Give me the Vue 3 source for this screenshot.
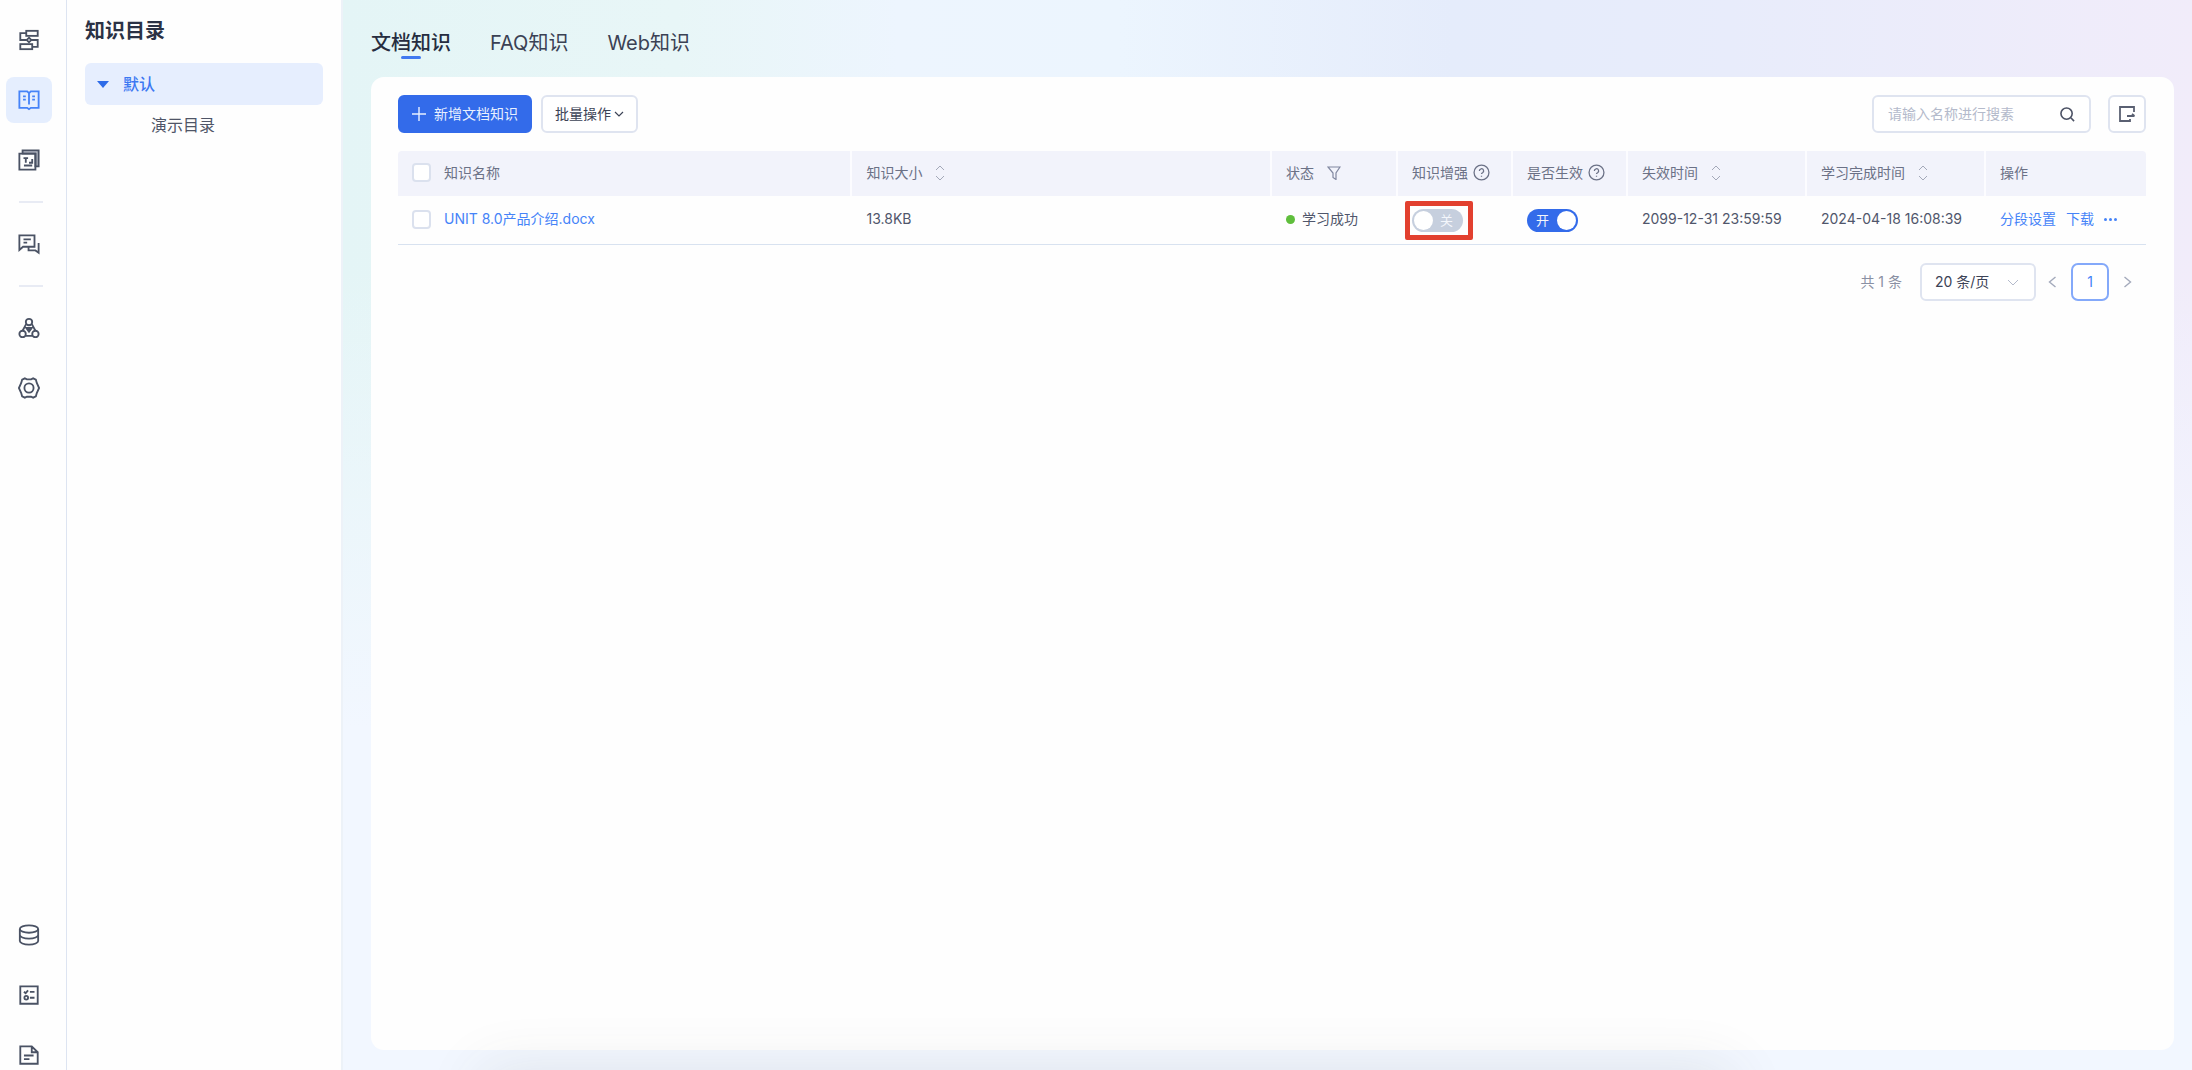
<script setup>
import { ref } from 'vue'

const tabs = ['文档知识', 'FAQ知识', 'Web知识']
const activeTab = ref(0)
const keyword = ref('')
const pageSize = ref('20')
const allChecked = ref(false)

const rows = ref([
  {
    id: 1,
    name: 'UNIT 8.0产品介绍.docx',
    size: '13.8KB',
    status: '学习成功',
    enhanced: false,
    enabled: true,
    expires: '2099-12-31 23:59:59',
    learned: '2024-04-18 16:08:39',
    checked: false,
  },
])
</script>

<template>
  <div class="app">
    <nav class="rail" aria-label="主导航">
      <div class="rail-group">
        <a class="rail-item" href="#" aria-label="流程">
          <svg viewBox="0 0 24 24" class="icon">
            <rect x="9" y="2" width="12.500" height="5.500" />
            <rect x="2.500" y="16.500" width="13" height="5.500" />
            <path d="M9 4.500H2.500V12h7M14 12h7.500v7.500h-6" />
            <path d="M12 9.500l2.500 2.500L12 14.500 9.500 12z" />
          </svg>
        </a>
        <a class="rail-item active" href="#" aria-label="知识">
          <svg viewBox="0 0 24 24" class="icon">
            <path d="M12 4.500L10 2.500H1.500v18h8.500l2 1.500 2-1.500h8.500v-18H14zM12 4.500V17M5.500 8h3M5.500 11.500h3M15.500 8h3M15.500 11.500h3" />
          </svg>
        </a>
        <a class="rail-item" href="#" aria-label="素材">
          <svg viewBox="0 0 24 24" class="icon">
            <path class="shade" d="M5 5V1.500h17.500V19H19V5z" />
            <path d="M1.500 5H19v17.500H1.500z" />
            <path d="M6 10h5M8.500 10v5M12 15h3.500v-4M6.500 18h9" />
          </svg>
        </a>
        <i class="rail-line"></i>
        <a class="rail-item" href="#" aria-label="对话">
          <svg viewBox="0 0 24 24" class="icon">
            <path d="M1.500 2.500H18V15H5.500l-4 3.500zM6 7h8M6 10.500h4M22.500 11v10.500L19 19h-7.500v-3" />
          </svg>
        </a>
        <i class="rail-line"></i>
        <a class="rail-item" href="#" aria-label="模型">
          <svg viewBox="0 0 24 24" class="icon">
            <circle cx="12" cy="5.500" r="3.500" />
            <circle cx="5" cy="18.500" r="3.500" />
            <circle cx="19" cy="18.500" r="3.500" />
            <path d="M9 7.500L5 15M15 7.500L19 15M8 20.500h8" />
            <path class="solid" d="M9 12h6l-3 4z" />
          </svg>
        </a>
        <a class="rail-item" href="#" aria-label="设置">
          <svg viewBox="0 0 24 24" class="icon">
            <path d="M7.500 1.500l2.200 1h4.600l2.200-1 3 1.500 1 3.500 2.500 5.500-2.500 5.500-1 3.500-3 1.500-2.200-1H9.700l-2.200 1-3-1.500-1-3.500L1 12l2.500-5.500 1-3.500z" />
            <circle cx="12" cy="12" r="5" />
          </svg>
        </a>
      </div>
      <div class="rail-group bottom">
        <a class="rail-item" href="#" aria-label="数据">
          <svg viewBox="0 0 24 24" class="icon">
            <ellipse cx="12" cy="5.500" rx="10" ry="4" />
            <path d="M2 5.500v13c0 2 4 4 10 4s10-2 10-4v-13M2 12c0 2 4 4 10 4s10-2 10-4" />
          </svg>
        </a>
        <a class="rail-item" href="#" aria-label="任务">
          <svg viewBox="0 0 24 24" class="icon">
            <path d="M2.500 2.500h19v19h-19zM6.500 8.500l1.800 1.500L11 7M13 8.500h5M13 15h5" />
            <circle cx="9" cy="15" r="2" />
          </svg>
        </a>
        <a class="rail-item" href="#" aria-label="文档">
          <svg viewBox="0 0 24 24" class="icon">
            <path d="M2.500 2.500H15l6.500 6.500v12.500h-19zM15 2.500V9h6.500M6.500 12.500h10.500M6.500 16.500h6" />
          </svg>
        </a>
      </div>
    </nav>

    <aside class="directory">
      <h1>知识目录</h1>
      <a class="tree-root" href="#"><i class="caret"></i>默认</a>
      <a class="tree-leaf" href="#">演示目录</a>
    </aside>

    <main class="main">
      <div class="tabs" role="tablist">
        <button
          v-for="(tab, i) in tabs"
          :key="tab"
          type="button"
          role="tab"
          class="tab"
          :class="{ current: i === activeTab }"
          :aria-selected="i === activeTab"
          @click="activeTab = i"
        >{{ tab }}</button>
      </div>

      <section class="card">
        <div class="toolbar">
          <button type="button" class="btn primary">
            <svg viewBox="0 0 14 14" class="plus"><path d="M7 0v14M0 7h14" /></svg>新增文档知识
          </button>
          <button type="button" class="btn">
            批量操作<svg viewBox="0 0 10 10" class="chevron"><path d="M1 3l4 4 4-4" /></svg>
          </button>
          <label class="search">
            <input v-model="keyword" type="text" placeholder="请输入名称进行搜素" aria-label="搜索名称" />
            <svg viewBox="0 0 16 16" class="search-icon"><circle cx="7" cy="7" r="6" /><path d="M11.500 11.500L15 15" /></svg>
          </label>
          <button type="button" class="btn square" aria-label="导出">
            <svg viewBox="0 0 18 18" class="export"><path d="M16 7V2H2v14h10v-2M9 11h7.500M14 9l2.500 2" /></svg>
          </button>
        </div>

        <table>
          <colgroup>
            <col class="c-check" /><col /><col class="c-size" /><col class="c-status" />
            <col class="c-switch" /><col class="c-switch" /><col class="c-time" /><col class="c-time" /><col class="c-ops" />
          </colgroup>
          <thead>
            <tr>
              <th class="check"><input v-model="allChecked" type="checkbox" aria-label="全选" /></th>
              <th class="name">知识名称</th>
              <th><span class="head">知识大小<svg viewBox="0 0 10 16" class="sort"><path d="M1 5l4-4 4 4M1 11l4 4 4-4" /></svg></span></th>
              <th><span class="head">状态<svg viewBox="0 0 14 14" class="filter"><path d="M1 1h12L9 7v6.500L6 11.500V7z" /></svg></span></th>
              <th><span class="head tight">知识增强<svg viewBox="0 0 16 16" class="help"><circle cx="8" cy="8" r="7" /><path d="M6 6.500a2 2 0 1 1 3 1.700q-1 .5-1 1.300M8 11v1" /></svg></span></th>
              <th><span class="head tight">是否生效<svg viewBox="0 0 16 16" class="help"><circle cx="8" cy="8" r="7" /><path d="M6 6.500a2 2 0 1 1 3 1.700q-1 .5-1 1.300M8 11v1" /></svg></span></th>
              <th><span class="head">失效时间<svg viewBox="0 0 10 16" class="sort"><path d="M1 5l4-4 4 4M1 11l4 4 4-4" /></svg></span></th>
              <th><span class="head">学习完成时间<svg viewBox="0 0 10 16" class="sort"><path d="M1 5l4-4 4 4M1 11l4 4 4-4" /></svg></span></th>
              <th>操作</th>
            </tr>
          </thead>
          <tbody>
            <tr v-for="row in rows" :key="row.id">
              <td class="check"><input v-model="row.checked" type="checkbox" :aria-label="row.name" /></td>
              <td class="name"><a href="#">{{ row.name }}</a></td>
              <td>{{ row.size }}</td>
              <td><span class="status">{{ row.status }}</span></td>
              <td>
                <label class="switch marked">
                  <input v-model="row.enhanced" type="checkbox" role="switch" aria-label="知识增强" />
                  <span>{{ row.enhanced ? '开' : '关' }}</span>
                </label>
              </td>
              <td>
                <label class="switch">
                  <input v-model="row.enabled" type="checkbox" role="switch" aria-label="是否生效" />
                  <span>{{ row.enabled ? '开' : '关' }}</span>
                </label>
              </td>
              <td>{{ row.expires }}</td>
              <td>{{ row.learned }}</td>
              <td>
                <span class="ops">
                  <a href="#">分段设置</a>
                  <a href="#">下载</a>
                  <a href="#" aria-label="更多"><svg viewBox="0 0 13 3" class="dots"><circle cx="1.500" cy="1.500" r="1.500" /><circle cx="6.500" cy="1.500" r="1.500" /><circle cx="11.500" cy="1.500" r="1.500" /></svg></a>
                </span>
              </td>
            </tr>
          </tbody>
        </table>

        <div class="pager">
          <span class="total">共 1 条</span>
          <label class="size">
            <select v-model="pageSize" aria-label="每页条数">
              <option value="20">20 条/页</option>
              <option value="50">50 条/页</option>
            </select>
            <svg viewBox="0 0 12 8" class="size-arrow"><path d="M1 1l5 5 5-5" /></svg>
          </label>
          <button type="button" class="step" aria-label="上一页"><svg viewBox="0 0 8 12"><path d="M7 1L1 6l6 5" /></svg></button>
          <button type="button" class="page">1</button>
          <button type="button" class="step" aria-label="下一页"><svg viewBox="0 0 8 12"><path d="M1 1l6 5-6 5" /></svg></button>
        </div>
      </section>
    </main>
    <div class="dock-shadow"></div>
  </div>
</template>

<style>
body {
  margin: 0;
}
</style>

<style scoped>
.app {
  position: relative;
  display: flex;
  height: 100vh;
  overflow: hidden;
  background: #fefefe;
  color: #50566b;
  font: 14px/20px Inter, "Noto Sans CJK SC", sans-serif;
}
.app * {
  box-sizing: border-box;
}
a {
  color: #4583f8;
  text-decoration: none;
}
svg {
  display: block;
  flex: none;
  fill: none;
  stroke: currentColor;
}
button,
input,
select {
  font: inherit;
  color: inherit;
}

/* icon rail */
.rail {
  display: flex;
  flex: none;
  flex-direction: column;
  justify-content: space-between;
  width: 67px;
  padding: 17px 0 0 6px;
  border-right: 1px solid #dde4f1;
}
.rail-group {
  display: flex;
  flex-direction: column;
  gap: 14px;
}
.rail-group.bottom {
  margin-bottom: -8px;
}
.rail-item {
  display: grid;
  place-items: center;
  width: 46px;
  height: 46px;
  border-radius: 8px;
  color: #4a5264;
}
.rail-item.active {
  background: #e5eefe;
  color: #4583f8;
}
.icon {
  width: 22px;
  height: 22px;
  stroke-width: 2;
}
.shade {
  fill: #b9bdc7;
}
.solid {
  fill: currentColor;
}
.rail-line {
  width: 24px;
  height: 2px;
  margin: 4px 13px;
  background: #e8ebf4;
}

/* directory tree */
.directory {
  flex: none;
  width: 276px;
  padding: 16px 18px;
  border-right: 2px solid #edf2f8;
}
h1 {
  margin: 0 0 17px;
  color: #2b3245;
  font-size: 20px;
  line-height: 30px;
  font-weight: 600;
}
.tree-root {
  display: flex;
  align-items: center;
  gap: 14px;
  height: 42px;
  padding-left: 12px;
  border-radius: 6px;
  background: #e6eefe;
  color: #3b78f2;
  font-size: 16px;
  font-weight: 500;
}
.caret {
  border: 6px solid transparent;
  border-top: 7px solid #2e6be8;
  border-bottom: 0;
}
.tree-leaf {
  display: block;
  padding-left: 66px;
  color: #4f5567;
  font-size: 16px;
  line-height: 40px;
}

/* content */
.main {
  display: flex;
  flex: 1;
  flex-direction: column;
  min-width: 0;
  padding: 0 18px 20px 28px;
  background:
    linear-gradient(180deg, rgba(242, 247, 255, 0) 25%, #f2f7ff 68%),
    linear-gradient(90deg, #e4f5f6 0%, #e8f6f7 18%, #edf5fe 30%, #ecf5fe 42%, #e5ecfb 60%, #e8ecfb 75%, #f1ecfa 100%);
}
.tabs {
  display: flex;
  gap: 39px;
  height: 77px;
  padding-top: 27px;
}
.tab {
  position: relative;
  height: 32px;
  padding: 0;
  border: 0;
  background: none;
  color: #3a4154;
  font-size: 20px;
  line-height: 30px;
}
.tab.current {
  color: #262d40;
  font-weight: 500;
}
.tab.current::after {
  position: absolute;
  bottom: 0;
  left: 50%;
  width: 20px;
  height: 3px;
  margin-left: -10px;
  border-radius: 2px;
  background: #4079f0;
  content: "";
}
.card {
  flex: 1;
  padding: 18px 28px 18px 27px;
  border-radius: 13px;
  background: #fefefe;
}
.toolbar {
  display: flex;
  margin-bottom: 18px;
}
.btn {
  display: flex;
  align-items: center;
  gap: 3px;
  height: 38px;
  margin-right: 9px;
  padding: 0 12px;
  border: 2px solid #dfe4f0;
  border-radius: 6px;
  background: #fff;
  color: #3c4356;
}
.btn.primary {
  gap: 8px;
  border-color: #336bea;
  background: #336bea;
  color: #e8f0ff;
}
.btn.square {
  justify-content: center;
  width: 38px;
  margin: 0;
  padding: 0;
}
.plus {
  width: 14px;
  height: 14px;
  stroke-width: 1.4;
}
.chevron {
  width: 10px;
  height: 10px;
  stroke-width: 1.2;
}
.search {
  display: flex;
  align-items: center;
  width: 219px;
  height: 38px;
  margin: 0 17px 0 auto;
  padding: 0 14px 0 14px;
  border: 2px solid #dfe4f0;
  border-radius: 6px;
  background: #fff;
}
.search input {
  flex: 1;
  min-width: 0;
  padding: 0;
  border: 0;
  outline: 0;
  background: none;
}
.search input::placeholder {
  color: #b4bacb;
  opacity: 1;
}
.search-icon {
  width: 15px;
  height: 15px;
  color: #4c5265;
  stroke-width: 1.7;
}
.export {
  width: 18px;
  height: 18px;
  color: #5a6072;
  stroke-width: 1.8;
}

/* table */
table {
  width: 100%;
  border-spacing: 0;
  table-layout: fixed;
}
.c-check {
  width: 46px;
}
.c-size {
  width: 24%;
}
.c-status {
  width: 126px;
}
.c-switch {
  width: 115px;
}
.c-time {
  width: 179px;
}
.c-ops {
  width: 160px;
}
th,
td {
  padding: 0 0 0 14px;
  text-align: left;
  white-space: nowrap;
}
th {
  height: 45px;
  padding-bottom: 2px;
  border-right: 2px solid #fcfcff;
  background: #f2f3fb;
  color: #6b7186;
  font-weight: 400;
}
th.check,
th:last-child {
  border-right: 0;
}
th:first-child {
  border-radius: 4px 0 0;
}
th:last-child {
  border-radius: 0 4px 0 0;
}
td {
  height: 49px;
  padding-bottom: 2px;
  border-bottom: 1px solid #d8e2f0;
}
th.name,
td.name {
  padding-left: 0;
}
.check input {
  display: block;
  width: 19px;
  height: 19px;
  margin: 0;
  border: 2px solid #dbe1ee;
  border-radius: 4px;
  background: #fff;
  appearance: none;
}
.check input:checked {
  border-color: #336bea;
  background: #336bea;
}
.head {
  display: flex;
  align-items: center;
  gap: 13px;
}
.head.tight {
  gap: 5px;
}
.sort {
  width: 10px;
  height: 16px;
  color: #a3a8b8;
}
.filter {
  width: 14px;
  height: 14px;
  color: #8087a0;
  stroke-width: 1.2;
}
.help {
  width: 17px;
  height: 17px;
  stroke-width: 1.2;
}
.status {
  display: flex;
  align-items: center;
  gap: 7px;
}
.status::before {
  width: 9px;
  height: 9px;
  border-radius: 50%;
  background: #5fbe3c;
  content: "";
}
.switch {
  position: relative;
  display: block;
  width: 51px;
  height: 23px;
  margin-top: 3px;
}
.switch input {
  display: flex;
  width: 51px;
  height: 23px;
  margin: 0;
  border-radius: 12px;
  background: #c6cfde;
  appearance: none;
}
.switch input::before {
  width: 19px;
  height: 19px;
  margin: 2px;
  border-radius: 50%;
  background: #fff;
  content: "";
}
.switch input:checked {
  background: #336bea;
}
.switch input:checked::before {
  margin-left: auto;
}
.switch span {
  position: absolute;
  top: 1px;
  right: 10px;
  color: #f3f6fb;
  font-size: 13px;
}
.switch input:checked + span {
  right: auto;
  left: 9px;
}
.marked::after {
  position: absolute;
  inset: -8px -10px -8px -7px;
  border: 5px solid #e2402f;
  border-radius: 2px;
  content: "";
  pointer-events: none;
}
.ops {
  display: flex;
  align-items: center;
  gap: 10px;
}
.dots {
  width: 13px;
  height: 3px;
  fill: currentColor;
  stroke: none;
}

/* pagination */
.pager {
  display: flex;
  align-items: center;
  justify-content: flex-end;
  margin-top: 18px;
  padding-right: 14px;
}
.total {
  margin-right: 18px;
  color: #8a90a3;
}
.size {
  position: relative;
  margin-right: 12px;
}
.size select {
  display: block;
  width: 116px;
  height: 38px;
  padding: 0 13px;
  border: 2px solid #dfe4f0;
  border-radius: 6px;
  background: #fff;
  color: #3c4356;
  appearance: none;
}
.size-arrow {
  position: absolute;
  top: 16px;
  right: 17px;
  width: 12px;
  height: 8px;
  color: #b4bacb;
  pointer-events: none;
}
.step {
  padding: 0;
  border: 0;
  background: none;
  color: #a3a9bb;
}
.step svg {
  width: 9px;
  height: 12px;
  stroke-width: 1.4;
}
.page {
  width: 38px;
  height: 38px;
  margin: 0 14px;
  padding: 0;
  border: 2px solid #84a9fa;
  border-radius: 7px;
  background: #fff;
  color: #4583f8;
}

/* soft shade rising from the bottom edge of the window */
.dock-shadow {
  position: absolute;
  top: 100%;
  right: 21%;
  left: 22%;
  height: 80px;
  box-shadow: 0 0 60px rgba(70, 75, 60, 0.11);
  pointer-events: none;
}
</style>
